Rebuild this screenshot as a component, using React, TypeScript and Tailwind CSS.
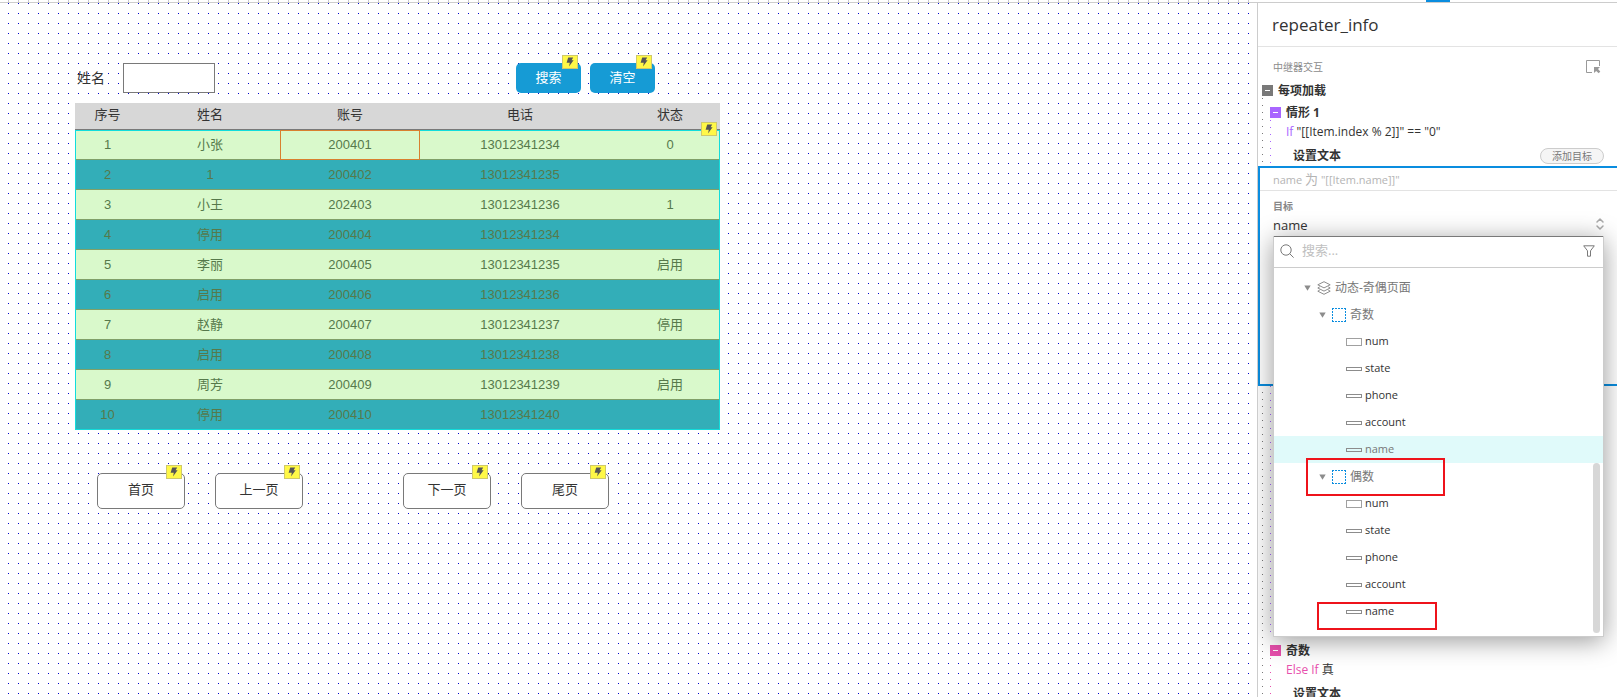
import type { ReactNode } from "react"
import { ChevronDown, ChevronUp } from "lucide-react"

const users = [
  ["1", "小张", "200401", "13012341234", "0"],
  ["2", "1", "200402", "13012341235", ""],
  ["3", "小王", "202403", "13012341236", "1"],
  ["4", "停用", "200404", "13012341234", ""],
  ["5", "李丽", "200405", "13012341235", "启用"],
  ["6", "启用", "200406", "13012341236", ""],
  ["7", "赵静", "200407", "13012341237", "停用"],
  ["8", "启用", "200408", "13012341238", ""],
  ["9", "周芳", "200409", "13012341239", "启用"],
  ["10", "停用", "200410", "13012341240", ""],
]

function EventBadge({ className }: { className: string }) {
  return (
    <span className={`absolute flex h-3.5 w-4 items-center justify-center border border-[#cfc96a] bg-[#fff847] ${className}`}>
      <svg viewBox="0 0 8 10" className="h-2.5 w-2 fill-[#555]">
        <path d="M2.2 0.6H7.2L5.6 3.2H7.6L3 9.6l0.8-3.8H0.6z" />
      </svg>
    </span>
  )
}

function SolidButton({ children }: { children: string }) {
  return (
    <button type="button" className="relative h-[30px] w-[65px] rounded-[5px] bg-[#169bd5] text-white">
      {children}
      <EventBadge className="-top-2 right-[3px]" />
    </button>
  )
}

function PageButton({ children }: { children: string }) {
  return (
    <button type="button" className="relative h-9 w-[88px] rounded-[5px] border border-[#797979] bg-white pb-0.5 text-[#333]">
      {children}
      <EventBadge className="-top-[9px] right-[2px]" />
    </button>
  )
}

function UserTable() {
  return (
    <div className="relative w-[645px]">
      <table className="w-full table-fixed border-collapse text-center">
        <colgroup>
          <col className="w-[65px]" />
          <col className="w-[140px]" />
          <col className="w-[140px]" />
          <col className="w-[200px]" />
          <col className="w-[100px]" />
        </colgroup>
        <thead>
          <tr className="h-[27px] bg-[#d7d7d7] text-[#333] shadow-[inset_0_-1px_#797979]">
            {["序号", "姓名", "账号", "电话", "状态"].map((h) => (
              <th key={h} className="p-0 pb-[3px] font-normal leading-5">{h}</th>
            ))}
          </tr>
        </thead>
        <tbody>
          {users.map((row) => (
            <tr
              key={row[0]}
              className="h-[30px] text-[#56794b] shadow-[inset_0_-1px_#80a068] odd:bg-[#d9f9cb] even:bg-[#33aeb8]"
            >
              {row.map((cell, i) => (
                <td key={i} className="p-0 leading-5">{cell}</td>
              ))}
            </tr>
          ))}
        </tbody>
      </table>
      <div className="pointer-events-none absolute inset-x-0 bottom-0 top-[27px] border border-[#12dcdc]" />
      <div className="pointer-events-none absolute left-[205px] top-[27px] h-[30px] w-[140px] border border-[#d9802f]" />
      <EventBadge className="right-[3px] top-[19px]" />
    </div>
  )
}

function Canvas() {
  return (
    <main className="min-w-0 flex-1 bg-white bg-[conic-gradient(from_270deg_at_1px_1px,#0000cc_90deg,transparent_0)] bg-size-[10px_10px] bg-position-[8px_0px] pl-[75px] pt-[60px] font-['Liberation_Sans','Noto_Sans_CJK_SC',sans-serif] text-[13px] text-[#333]">
      <div className="flex w-[645px] items-center">
        <label htmlFor="user-name" className="w-12 pl-0.5 text-sm">姓名</label>
        <input id="user-name" className="h-[30px] w-[92px] border border-[#797979] bg-white px-1" />
        <div className="ml-auto mr-[65px] flex gap-[9px]">
          <SolidButton>搜索</SolidButton>
          <SolidButton>清空</SolidButton>
        </div>
      </div>
      <div className="mt-2.5">
        <UserTable />
      </div>
      <div className="ml-[22px] mt-[43px] flex gap-[30px]">
        <PageButton>首页</PageButton>
        <PageButton>上一页</PageButton>
        <div className="w-10" />
        <PageButton>下一页</PageButton>
        <PageButton>尾页</PageButton>
      </div>
    </main>
  )
}

function Toggle({ className }: { className: string }) {
  return (
    <button type="button" aria-label="折叠" className={`flex size-[11px] shrink-0 items-center justify-center ${className}`}>
      <span className="h-px w-[5px] bg-white" />
    </button>
  )
}

function TreeArrow() {
  return (
    <svg viewBox="0 0 7 6" className="h-1.5 w-[7px] shrink-0 fill-[#8c8c8c]">
      <path d="M0.3 0.5h6.4L3.5 5.8z" />
    </svg>
  )
}

function GroupRow({ name }: { name: string }) {
  return (
    <li className="flex h-[27px] items-center pl-[45px] text-[12px] text-[#777]">
      <TreeArrow />
      <svg viewBox="0 0 14 14" className="ml-1.5 mr-1 size-3.5 fill-none stroke-[#0a8ddf]">
        <path d="M0 0.5h14M0 13.5h14M0.5 0v14M13.5 0v14" strokeDasharray="2 1" />
      </svg>
      {name}
    </li>
  )
}

function WidgetRow({ name, tall, selected }: { name: string; tall?: boolean; selected?: boolean }) {
  return (
    <li className={`flex h-[27px] items-center pl-[72px] text-[11px] ${selected ? "bg-[#e0fafa] text-[#777]" : "text-[#333]"}`}>
      <span className={`mr-[3px] w-4 border ${tall ? "h-2 border-[#a0a0a0]" : "h-1 border-[#8c8c8c]"}`} />
      {name}
    </li>
  )
}

function Widgets({ selected }: { selected?: string }) {
  return (
    <>
      {["num", "state", "phone", "account", "name"].map((name) => (
        <WidgetRow key={name} name={name} tall={name === "num"} selected={name === selected} />
      ))}
    </>
  )
}

function TargetPicker() {
  return (
    <div className="absolute inset-x-0 top-full z-10 border border-t-0 border-[#ccc] bg-white shadow-[0_4px_24px_rgba(0,0,0,0.4)]">
      <div className="h-px bg-[#797979]" />
      <div className="flex h-[31px] items-center border-b border-[#ccc] pb-0.5 pl-1.5 pr-2">
        <svg viewBox="0 0 14 14" className="size-3.5 fill-none stroke-[#797979]">
          <circle cx="6" cy="6" r="5.2" />
          <path d="M9.6 9.6l4 4" />
        </svg>
        <input
          aria-label="搜索"
          placeholder="搜索..."
          className="ml-2 min-w-0 flex-1 text-[13px] outline-none placeholder:text-[#c0c0c0]"
        />
        <svg viewBox="0 0 12 12" className="size-3 fill-none stroke-[#797979]">
          <path d="M0.7 0.8h10.6L7.5 5.8v5.4h-3V5.8z" />
        </svg>
      </div>
      <ul className="pb-[11px] pt-1.5">
        <li className="flex h-[27px] items-center pl-[30px] text-[12px] text-[#777]">
          <TreeArrow />
          <svg viewBox="0 0 14 14" className="ml-1.5 mr-1 size-3.5 fill-none stroke-[#8c8c8c]">
            <path d="M7 0.7L13.2 3.8 7 6.9 0.8 3.8z" />
            <path d="M2.8 5.8L0.8 7 7 10.1 13.2 7l-2-1.2M2.8 9L0.8 10.2 7 13.3l6.2-3.1-2-1.2" />
          </svg>
          动态-奇偶页面
        </li>
        <GroupRow name="奇数" />
        <Widgets selected="name" />
        <GroupRow name="偶数" />
        <Widgets />
      </ul>
      <div className="absolute bottom-[3px] right-[3px] h-[170px] w-[7px] rounded-full bg-[#d7d7d7]" />
      <div className="absolute left-8 top-[222px] h-[38px] w-[139px] border-2 border-[#ee131b]" />
      <div className="absolute left-[43px] top-[366px] h-7 w-[120px] border-2 border-[#ee131b]" />
    </div>
  )
}

function ActionEditor() {
  return (
    <div className="mt-0.5 h-[220px] border-2 border-r-0 border-[#0a8ddf] bg-white">
      <p className="h-[23px] border-b border-[#e3e3e3] pl-[13px] text-[11px] leading-[22px] text-[#b4b4b4]">
        name <span className="text-[13px]">为</span> "[[Item.name]]"
      </p>
      <div className="ml-[13px] mr-[13px] pt-2">
        <label htmlFor="target" className="block h-3.5 text-[10px] font-bold leading-3.5 text-[#888]">目标</label>
        <div className="relative flex h-[23px] items-center justify-between">
          <select id="target" className="flex-1 appearance-none pt-0.5 text-[13px] text-[#333] outline-none">
            <option>name</option>
          </select>
          <span className="pointer-events-none absolute -right-0.5 top-1 text-[#aaa]">
            <ChevronUp className="h-[7px] w-3" strokeWidth={3} preserveAspectRatio="xMidYMid slice" />
            <ChevronDown className="h-[7px] w-3" strokeWidth={3} preserveAspectRatio="xMidYMid slice" />
          </span>
          <TargetPicker />
        </div>
      </div>
    </div>
  )
}

type CaseProps = {
  title: string
  toggle: string
  line: string
  condition: ReactNode
  addButton?: boolean
  children?: ReactNode
}

function Case({ title, toggle, line, condition, addButton, children }: CaseProps) {
  return (
    <section>
      <h3 className="flex h-[15px] items-center gap-[5px] pl-3 font-bold">
        <Toggle className={toggle} />
        {title}
      </h3>
      <div className={`bg-size-[1px_7px] bg-position-[12px_0px] bg-repeat-y pt-0.5 ${line}`}>
        <p className="h-5 pl-7 leading-5">{condition}</p>
        <div className="mt-1.5 flex h-4 items-center justify-between pl-[35px] pr-[13px]">
          <h4 className="font-bold">设置文本</h4>
          {addButton && (
            <button type="button" className="h-4 w-16 rounded-lg border border-[#ccc] bg-[#f5f5f5] text-[10px] leading-3.5 text-[#797979]">
              添加目标
            </button>
          )}
        </div>
        {children}
      </div>
    </section>
  )
}

function Inspector() {
  return (
    <aside className="w-[360px] shrink-0 overflow-hidden border-l border-[#ccc] bg-white font-['Open_Sans','Noto_Sans_CJK_SC',sans-serif] text-[12px] text-[#333]">
      <h1 className="flex h-11 items-center border-b border-[#e3e3e3] pl-3.5 text-[17px]">repeater_info</h1>
      <div className="flex h-9 items-center justify-between pl-[15px] pr-4 pt-1">
        <span className="text-[10px] text-[#8c8c8c]">中继器交互</span>
        <button type="button" aria-label="新建交互">
          <svg viewBox="0 0 15 14" className="h-3.5 w-[15px] fill-none stroke-[#999]">
            <path d="M6 12.5H0.5V0.5h13V6" />
            <path d="M8 7h6l-2 2 2.3 2.6-1.6 1.6L10.2 11 8 13z" className="fill-[#999] stroke-none" />
          </svg>
        </button>
      </div>
      <h2 className="flex h-[15px] items-center gap-[5px] pl-1 font-bold">
        <Toggle className="bg-[#797979]" />
        每项加载
      </h2>
      <div className="bg-[linear-gradient(#797979_1px,transparent_1px)] bg-size-[1px_7px] bg-position-[4px_0px] bg-repeat-y pt-[7px]">
        <Case
          title="情形 1"
          toggle="bg-[#a966ff]"
          line="bg-[linear-gradient(#a966ff_1px,transparent_1px)] pb-[251px]"
          condition={<><span className="text-[#a966ff]">If</span> "[[Item.index % 2]]" == "0"</>}
          addButton
        >
          <ActionEditor />
        </Case>
        <div className="pt-1.5">
          <Case
            title="奇数"
            toggle="bg-[#e84fad]"
            line="bg-[linear-gradient(#e84fad_1px,transparent_1px)]"
            condition={<><span className="text-[#e84fad]">Else If</span> 真</>}
          />
        </div>
      </div>
    </aside>
  )
}

export default function App() {
  return (
    <div className="flex h-screen flex-col overflow-hidden bg-white">
      <header className="flex h-[3px] border-b border-[#ccc]">
        <div className="flex-1 bg-[linear-gradient(to_right,#ccc_1px,transparent_1px)] bg-size-[10px_2px] bg-position-[8px_0px]" />
        <div className="w-[360px] pl-[169px]">
          <div className="h-0.5 w-6 bg-[#0a8ddf]" />
        </div>
      </header>
      <div className="flex min-h-0 flex-1">
        <Canvas />
        <Inspector />
      </div>
    </div>
  )
}
